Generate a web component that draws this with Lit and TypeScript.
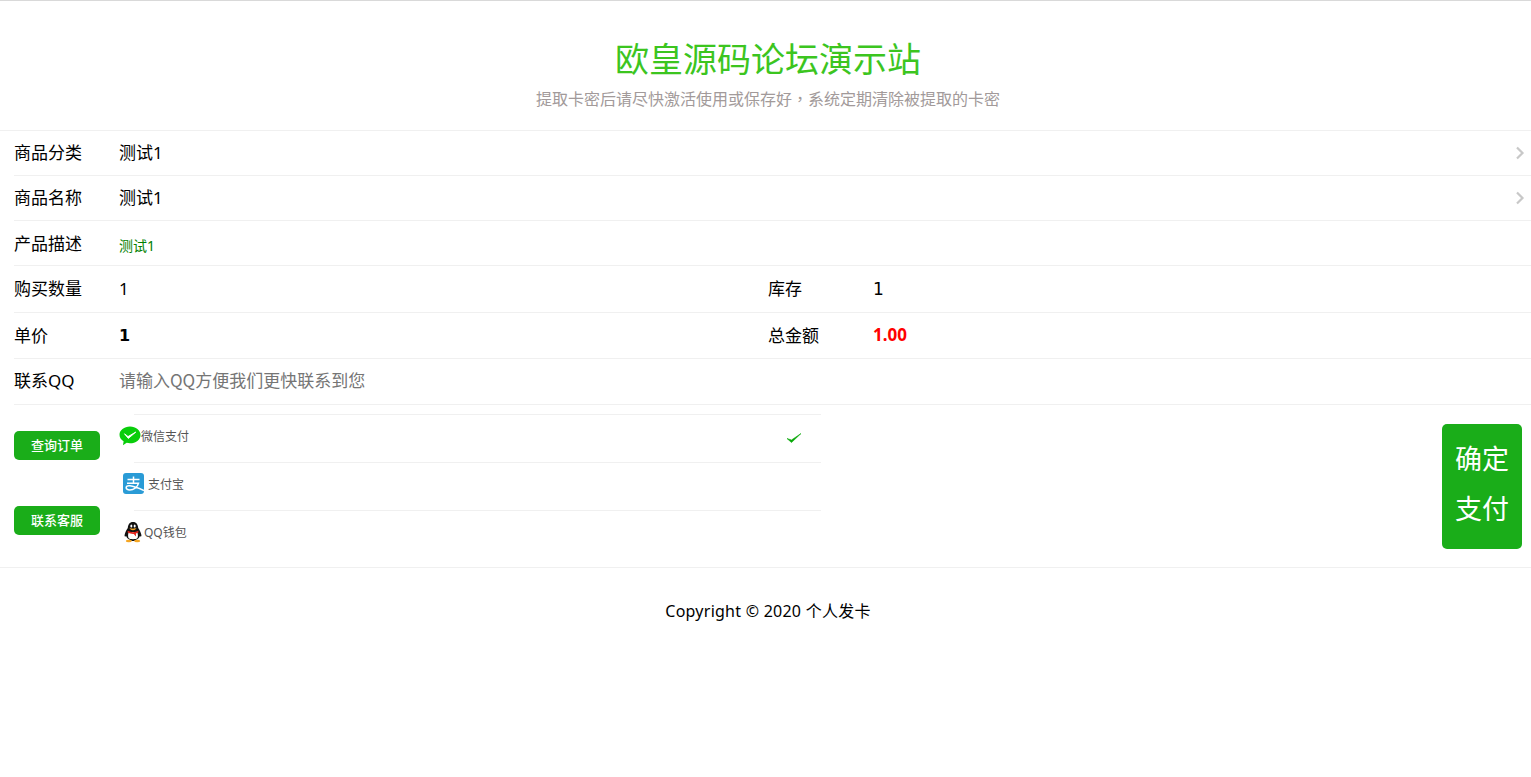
import { LitElement, html, css } from "lit";
import { customElement } from "lit/decorators.js";

const chevron = html`<svg class="chev" width="10" height="14" viewBox="0 0 10 14"><path d="M2 1.500 L7.500 7 L2 12.500" fill="none" stroke="#c8c8c8" stroke-width="2.200"/></svg>`;

const wechat = html`<svg class="ic" width="22" height="20" viewBox="0 0 22 20"><path d="M11 .5C5.200 .5 .5 4.200 .5 8.800c0 2.600 1.600 4.900 4.100 6.500L4 19.200l3.700-2.400c1.100.3 2.200.4 3.300.4 5.800 0 10.500-3.700 10.500-8.300S16.800 .5 11 .5z" fill="#09cd0b"/><path d="M5.500 7.800l3.500 2.800 7.800-4.500-7.500 6.300z" fill="#fff" stroke="#fff" stroke-width=".9" stroke-linejoin="round"/></svg>`;

const alipay = html`<svg class="ic" width="21" height="21" viewBox="0 0 21 21"><rect width="21" height="21" rx="3" fill="#2a9bd6"/><path d="M4.500 6.500H16.500M10.500 3.500V10M4 10.300H15.500C14.300 14.500 10.500 17 6.800 17 4.300 17 3 15.700 3.200 14.300 3.500 12.300 7 11.200 21 17.500" fill="none" stroke="#fff" stroke-width="1.500"/></svg>`;

const qq = html`<svg class="ic" width="20" height="22" viewBox="0 0 20 22">
  <path d="M10 1C6.500 1 5 3.700 4.800 7 3.500 9 2 11.500 1.600 14c-.2 1.500.5 2 1.500 1 .4 1.200 1 2 1.900 2.800L9 20h2l4-2.200c.9-.8 1.500-1.600 1.900-2.800 1 1 1.700.5 1.500-1-.4-2.500-1.900-5-3.200-7C15 3.700 13.500 1 10 1z" fill="#111"/>
  <path d="M5.800 11C5 13 4.800 15 5.500 17c1 1.600 8 1.600 9 0 .7-2 .5-4-.3-6z" fill="#fff"/>
  <ellipse cx="5.800" cy="20" rx="3" ry="1.300" fill="#f5a623"/><ellipse cx="14.200" cy="20" rx="3" ry="1.300" fill="#f5a623"/>
  <path d="M6.500 6.800c1.500 1.200 5.500 1.200 7 0-.3 1.600-1.600 2.500-3.500 2.500S6.800 8.400 6.500 6.800z" fill="#f5a623"/>
  <ellipse cx="8.300" cy="5" rx="1" ry="1.500" fill="#fff"/><ellipse cx="11.700" cy="5" rx="1" ry="1.500" fill="#fff"/>
  <path d="M4.800 9.800c3 1.800 7.400 1.800 10.400 0l.3 1.500c-.8.600-1.700 1-2.600 1.300L13 15.500 10.800 13c-2 .2-4.300-.5-6.300-1.700z" fill="#e3231b"/>
</svg>`;

const check = html`<svg width="16" height="12" viewBox="0 0 16 12"><path d="M1 6.500 L5.500 10.500 L15 1.500 L5.500 8 Z" fill="#08a808" stroke="#08a808" stroke-width=".6" stroke-linejoin="round"/></svg>`;

@customElement("app-root")
export class AppRoot extends LitElement {
  static styles = css`
    :host {
      display: block;
      font-family: "Noto Sans", "Noto Sans CJK SC", sans-serif;
      color: #000;
      background: #fff;
      min-height: 777px;
    }
    header {
      border-top: 1px solid #d9d9d9;
      border-bottom: 1px solid #f0f0f0;
      height: 131px;
      box-sizing: border-box;
      text-align: center;
      padding: 36px 0 0 5px;
    }
    h1 {
      margin: 0;
      font-size: 34px;
      line-height: 44px;
      font-weight: 400;
      color: #3cc51f;
    }
    .sub {
      font-family: "Noto Sans CJK TC", sans-serif;
      font-size: 16px;
      line-height: 24px;
      margin-top: 5px;
      color: #a29a9a;
    }
    .row {
      display: flex;
      align-items: center;
      box-sizing: border-box;
      margin-left: 14px;
      border-bottom: 1px solid #f0f0f0;
      font-size: 17px;
      line-height: 24px;
      position: relative;
    }
    .h45 { height: 45px; }
    .h46 { height: 46px; }
    .h47 { height: 47px; }
    .label { width: 105px; flex: none; }
    .half { width: 754px; flex: none; display: flex; align-items: center; }
    .half .value { flex: 1; }
    .half.right { width: auto; }
    .value { flex: 1; }
    .desc-row { padding-top: 2px; }
    .contact-row { padding-bottom: 2px; }
    .desc { font-size: 14px; color: #008000; padding-top: 3px; }
    .stock { font-family: "DejaVu Sans", sans-serif; font-size: 17px; }
    .bold { font-family: "DejaVu Sans", sans-serif; font-weight: 700; font-size: 16px; }
    .red { color: #f00; font-weight: 700; padding-bottom: 2px; }
    .chev { position: absolute; right: 6px; top: 15px; }
    input {
      display: block;
      border: 0;
      outline: 0;
      padding: 0;
      margin: 0 0 2px;
      width: 100%;
      background: transparent;
      font-family: "Noto Sans CJK SC", sans-serif;
      font-size: 17px;
      color: #000;
    }
    input::placeholder { color: #757575; opacity: 1; }
    .pay {
      display: flex;
      height: 163px;
      box-sizing: border-box;
      border-bottom: 1px solid #f0f0f0;
      padding: 9px 9px 0 14px;
    }
    .side {
      width: 86px;
      flex: none;
      display: flex;
      flex-direction: column;
      gap: 46px;
      padding-top: 17px;
    }
    .btn {
      height: 29px;
      width: 86px;
      background: #1aad19;
      color: #fff;
      border-radius: 5px;
      font-size: 13px;
      font-weight: 500;
      display: flex;
      align-items: center;
      justify-content: center;
      padding-bottom: 2px;
      box-sizing: border-box;
    }
    .methods { width: 721px; flex: none; }
    .method {
      height: 48px;
      display: flex;
      align-items: center;
      font-size: 12px;
      color: #555;
      position: relative;
      padding-left: 19px;
      padding-bottom: 5px;
      box-sizing: border-box;
    }
    .method::before {
      content: "";
      position: absolute;
      top: 0;
      left: 34px;
      right: 0;
      border-top: 1px solid #f0f0f0;
    }
    .ic { flex: none; }
    .tick { position: absolute; left: 686px; top: 17px; }
    .m2 { padding-left: 23px; }
    .m2 .ic { margin-right: 4px; }
    .m3 { padding-left: 23px; }
    .m3 .ic { margin-right: 1px; }
    .submit {
      margin-left: auto;
      margin-top: 10px;
      width: 80px;
      height: 125px;
      padding-bottom: 6px;
      box-sizing: border-box;
      background: #1aad19;
      color: #fff;
      border-radius: 5px;
      font-size: 27px;
      line-height: 50px;
      text-align: center;
      display: flex;
      flex-direction: column;
      justify-content: center;
    }
    footer {
      text-align: center;
      font-size: 16px;
      line-height: 24px;
      letter-spacing: 0.25px;
      padding: 31px 0 0 5px;
    }
  `;

  render() {
    return html`
      <header>
        <h1>欧皇源码论坛演示站</h1>
        <div class="sub">提取卡密后请尽快激活使用或保存好，系统定期清除被提取的卡密</div>
      </header>
      <div class="row h45"><div class="label">商品分类</div><div class="value">测试1</div>${chevron}</div>
      <div class="row h45"><div class="label">商品名称</div><div class="value">测试1</div>${chevron}</div>
      <div class="row h45 desc-row"><div class="label">产品描述</div><div class="value desc">测试1</div></div>
      <div class="row h47">
        <div class="half"><div class="label">购买数量</div><div class="value">1</div></div>
        <div class="half right"><div class="label">库存</div><div class="value stock">1</div></div>
      </div>
      <div class="row h46">
        <div class="half"><div class="label">单价</div><div class="value bold">1</div></div>
        <div class="half right"><div class="label">总金额</div><div class="value red">1.00</div></div>
      </div>
      <div class="row h46 contact-row">
        <div class="label">联系QQ</div>
        <div class="value"><input placeholder="请输入QQ方便我们更快联系到您" /></div>
      </div>
      <section class="pay">
        <div class="side">
          <div class="btn">查询订单</div>
          <div class="btn">联系客服</div>
        </div>
        <div class="methods">
          <div class="method m1">${wechat}<span>微信支付</span><span class="tick">${check}</span></div>
          <div class="method m2">${alipay}<span>支付宝</span></div>
          <div class="method m3">${qq}<span>QQ钱包</span></div>
        </div>
        <div class="submit"><span>确定</span><span>支付</span></div>
      </section>
      <footer>Copyright © 2020 个人发卡</footer>
    `;
  }
}
